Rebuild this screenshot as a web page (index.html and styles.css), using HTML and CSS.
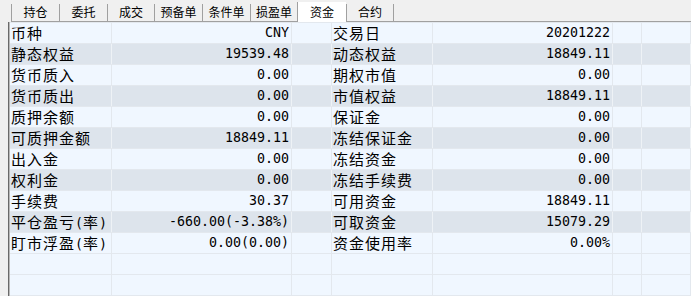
FILE: index.html
```html
<!DOCTYPE html>
<html lang="zh-CN">
<head>
<meta charset="utf-8">
<title>资金</title>
<link rel="stylesheet" href="styles.css">
</head>
<body>
<div class="app">
  <div class="tabbar">
    <div class="tab t48">持仓</div>
    <div class="tab t48">委托</div>
    <div class="tab t47">成交</div>
    <div class="tab t48">预备单</div>
    <div class="tab t48">条件单</div>
    <div class="tab t47">损盈单</div>
    <div class="tab t49 active">资金</div>
    <div class="tab t48 last">合约</div>
    <div class="tabfill"></div>
  </div>
  <div class="frame">
    <div class="grid">
      <div class="row"><div class="c lbl">币种</div><div class="c num">CNY</div><div class="c"></div><div class="c lbl">交易日</div><div class="c num">20201222</div><div class="c"></div><div class="c"></div></div>
      <div class="row alt"><div class="c lbl">静态权益</div><div class="c num">19539.48</div><div class="c"></div><div class="c lbl">动态权益</div><div class="c num">18849.11</div><div class="c"></div><div class="c"></div></div>
      <div class="row"><div class="c lbl">货币质入</div><div class="c num">0.00</div><div class="c"></div><div class="c lbl">期权市值</div><div class="c num">0.00</div><div class="c"></div><div class="c"></div></div>
      <div class="row alt"><div class="c lbl">货币质出</div><div class="c num">0.00</div><div class="c"></div><div class="c lbl">市值权益</div><div class="c num">18849.11</div><div class="c"></div><div class="c"></div></div>
      <div class="row"><div class="c lbl">质押余额</div><div class="c num">0.00</div><div class="c"></div><div class="c lbl">保证金</div><div class="c num">0.00</div><div class="c"></div><div class="c"></div></div>
      <div class="row alt"><div class="c lbl">可质押金额</div><div class="c num">18849.11</div><div class="c"></div><div class="c lbl">冻结保证金</div><div class="c num">0.00</div><div class="c"></div><div class="c"></div></div>
      <div class="row"><div class="c lbl">出入金</div><div class="c num">0.00</div><div class="c"></div><div class="c lbl">冻结资金</div><div class="c num">0.00</div><div class="c"></div><div class="c"></div></div>
      <div class="row alt"><div class="c lbl">权利金</div><div class="c num">0.00</div><div class="c"></div><div class="c lbl">冻结手续费</div><div class="c num">0.00</div><div class="c"></div><div class="c"></div></div>
      <div class="row"><div class="c lbl">手续费</div><div class="c num">30.37</div><div class="c"></div><div class="c lbl">可用资金</div><div class="c num">18849.11</div><div class="c"></div><div class="c"></div></div>
      <div class="row alt"><div class="c lbl">平仓盈亏<span class="p">(</span>率<span class="p">)</span></div><div class="c num">-660.00(-3.38%)</div><div class="c"></div><div class="c lbl">可取资金</div><div class="c num">15079.29</div><div class="c"></div><div class="c"></div></div>
      <div class="row"><div class="c lbl">盯市浮盈<span class="p">(</span>率<span class="p">)</span></div><div class="c num">0.00(0.00)</div><div class="c"></div><div class="c lbl">资金使用率</div><div class="c num">0.00%</div><div class="c"></div><div class="c"></div></div>
      <div class="row"><div class="c"></div><div class="c"></div><div class="c"></div><div class="c"></div><div class="c"></div><div class="c"></div><div class="c"></div></div>
      <div class="row"><div class="c"></div><div class="c"></div><div class="c"></div><div class="c"></div><div class="c"></div><div class="c"></div><div class="c"></div></div>
      <div class="row"><div class="c"></div><div class="c"></div><div class="c"></div><div class="c"></div><div class="c"></div><div class="c"></div><div class="c"></div></div>
    </div>
  </div>
</div>
</body>
</html>
```

FILE: styles.css
```css
html, body {
  margin: 0;
  padding: 0;
  background: #f0f0f0;
  overflow: hidden;
}
.app {
  width: 691px;
  height: 296px;
  overflow: hidden;
  font-family: "Noto Sans CJK SC", "Noto Sans", sans-serif;
  color: #000;
}
.tabbar {
  display: flex;
  height: 22px;
  padding-left: 11px;
  box-sizing: border-box;
}
.tab {
  box-sizing: border-box;
  margin-top: 4px;
  height: 18px;
  border-left: 1px solid #a0a0a0;
  border-bottom: 1px solid #a0a0a0;
  font-size: 12px;
  line-height: 16px;
  text-align: center;
}
.t47 { width: 47px; }
.t48 { width: 48px; }
.t49 { width: 49px; }
.tab.active {
  margin-top: 2px;
  height: 20px;
  padding-top: 2px;
  background: #ffffff;
  border-bottom: none;
}
.tab.last {
  border-right: 1px solid #a0a0a0;
}
.tabfill {
  flex: 1;
  border-bottom: 1px solid #a0a0a0;
}
.frame {
  margin-left: 8px;
  border-left: 1px solid #6a6a6a;
  height: 274px;
}
.grid {
  border-left: 1px solid #b9b9b9;
  background: #f0f7ff;
}
.row {
  display: grid;
  grid-template-columns: 102px 180px 40px 101px 180px 29px 1fr;
  height: 21px;
  box-sizing: border-box;
  border-top: 1px solid #e3e8ee;
  background: #f0f7ff;
}
.row.alt {
  background: #dde4ec;
}
.c {
  border-right: 1px solid #e3e8ee;
  height: 20px;
  line-height: 20px;
  white-space: nowrap;
}
.row.alt .c {
  border-right-color: #eef2f6;
}
.lbl {
  font-size: 15px;
  letter-spacing: 1px;
  padding-left: 1px;
  line-height: 19px;
}
.p {
  font-family: "DejaVu Sans Mono", monospace;
  font-size: 13.3px;
  letter-spacing: 0;
}
.num {
  font-family: "DejaVu Sans Mono", monospace;
  font-size: 13.3px;
  text-align: right;
  padding-right: 2px;
}
```
